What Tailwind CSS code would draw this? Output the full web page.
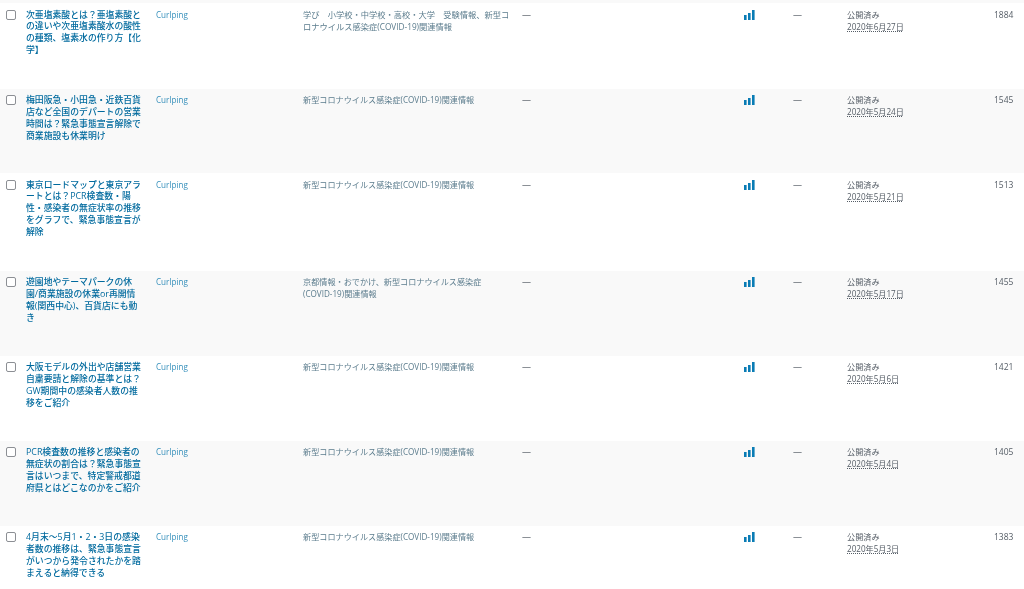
<!DOCTYPE html>
<html lang="ja"><head><meta charset="utf-8"><script src="https://cdn.jsdelivr.net/npm/@tailwindcss/browser@4"></script></head>
<body class="bg-white overflow-hidden font-['Open_Sans','Noto_Sans_CJK_JP',sans-serif] text-[8.15px] leading-[11.67px] text-[#555d66]">
<div class="h-[589px] overflow-hidden blur-[0.3px]">
<div class="h-[3px] bg-[#f9f9f9]"></div>

<div class="grid grid-cols-[26px_130px_147px_219px_221px_50px_54px_147px_30px] h-[86px] pt-[6px] bg-white">
<div class="pl-[6px] pt-[1px]"><div class="size-[10px] rounded-[2px] border border-[#8c8f94] bg-white"></div></div>
<a class="pt-[0.5px] text-[8.85px] leading-[11.9px] font-medium text-[#006a9e] whitespace-nowrap">次亜塩素酸とは？亜塩素酸と<br>の違いや次亜塩素酸水の酸性<br>の種類、塩素水の作り方【化<br>学】</a>
<a class="text-[#0073aa]/80">Curlping</a>
<a class="text-[8.25px] text-[#5b7c8d] whitespace-nowrap">学び　小学校・中学校・高校・大学　受験情報、新型コ<br>ロナウイルス感染症(COVID-19)関連情報</a>
<div class="text-[9px]">—</div>
<div><svg width="12" height="11" viewBox="0 0 12 11" class="fill-[#0a7cb5] block"><rect x="1" y="6" width="2.6" height="5"/><rect x="5" y="4" width="2.6" height="7"/><rect x="9" y="1" width="2.6" height="10"/></svg></div>
<div class="text-[9px]">—</div>
<div>公開済み<br><span class="underline decoration-dotted">2020年6月27日</span></div>
<div class="text-[8.5px]">1884</div>
</div>

<div class="grid grid-cols-[26px_130px_147px_219px_221px_50px_54px_147px_30px] h-[84px] pt-[5px] bg-[#f9f9f9]">
<div class="pl-[6px] pt-[1px]"><div class="size-[10px] rounded-[2px] border border-[#8c8f94] bg-white"></div></div>
<a class="pt-[1px] text-[8.85px] leading-[11.9px] font-medium text-[#006a9e] whitespace-nowrap">梅田阪急・小田急・近鉄百貨<br>店など全国のデパートの営業<br>時間は？緊急事態宣言解除で<br>商業施設も休業明け</a>
<a class="text-[#0073aa]/80">Curlping</a>
<a class="text-[#5b7c8d] whitespace-nowrap">新型コロナウイルス感染症(COVID-19)関連情報</a>
<div class="text-[9px]">—</div>
<div><svg width="12" height="11" viewBox="0 0 12 11" class="fill-[#0a7cb5] block"><rect x="1" y="6" width="2.6" height="5"/><rect x="5" y="4" width="2.6" height="7"/><rect x="9" y="1" width="2.6" height="10"/></svg></div>
<div class="text-[9px]">—</div>
<div>公開済み<br><span class="underline decoration-dotted">2020年5月24日</span></div>
<div class="text-[8.5px]">1545</div>
</div>

<div class="grid grid-cols-[26px_130px_147px_219px_221px_50px_54px_147px_30px] h-[98px] pt-[6px] bg-white">
<div class="pl-[6px] pt-[1px]"><div class="size-[10px] rounded-[2px] border border-[#8c8f94] bg-white"></div></div>
<a class="pt-[0.5px] text-[8.85px] leading-[11.9px] font-medium text-[#006a9e] whitespace-nowrap">東京ロードマップと東京アラ<br>ートとは？PCR検査数・陽<br>性・感染者の無症状率の推移<br>をグラフで、緊急事態宣言が<br>解除</a>
<a class="text-[#0073aa]/80">Curlping</a>
<a class="text-[#5b7c8d] whitespace-nowrap">新型コロナウイルス感染症(COVID-19)関連情報</a>
<div class="text-[9px]">—</div>
<div><svg width="12" height="11" viewBox="0 0 12 11" class="fill-[#0a7cb5] block"><rect x="1" y="6" width="2.6" height="5"/><rect x="5" y="4" width="2.6" height="7"/><rect x="9" y="1" width="2.6" height="10"/></svg></div>
<div class="text-[9px]">—</div>
<div>公開済み<br><span class="underline decoration-dotted">2020年5月21日</span></div>
<div class="text-[8.5px]">1513</div>
</div>

<div class="grid grid-cols-[26px_130px_147px_219px_221px_50px_54px_147px_30px] h-[85px] pt-[5px] bg-[#f9f9f9]">
<div class="pl-[6px] pt-[1px]"><div class="size-[10px] rounded-[2px] border border-[#8c8f94] bg-white"></div></div>
<a class="pt-[1px] text-[8.85px] leading-[11.9px] font-medium text-[#006a9e] whitespace-nowrap">遊園地やテーマパークの休<br>園/商業施設の休業or再開情<br>報(関西中心)、百貨店にも動<br>き</a>
<a class="text-[#0073aa]/80">Curlping</a>
<a class="text-[#5b7c8d] whitespace-nowrap">京都情報・おでかけ、新型コロナウイルス感染症<br>(COVID-19)関連情報</a>
<div class="text-[9px]">—</div>
<div><svg width="12" height="11" viewBox="0 0 12 11" class="fill-[#0a7cb5] block"><rect x="1" y="6" width="2.6" height="5"/><rect x="5" y="4" width="2.6" height="7"/><rect x="9" y="1" width="2.6" height="10"/></svg></div>
<div class="text-[9px]">—</div>
<div>公開済み<br><span class="underline decoration-dotted">2020年5月17日</span></div>
<div class="text-[8.5px]">1455</div>
</div>

<div class="grid grid-cols-[26px_130px_147px_219px_221px_50px_54px_147px_30px] h-[85px] pt-[5px] bg-white">
<div class="pl-[6px] pt-[1px]"><div class="size-[10px] rounded-[2px] border border-[#8c8f94] bg-white"></div></div>
<a class="pt-[1px] text-[8.85px] leading-[11.9px] font-medium text-[#006a9e] whitespace-nowrap">大阪モデルの外出や店舗営業<br>自粛要請と解除の基準とは？<br>GW期間中の感染者人数の推<br>移をご紹介</a>
<a class="text-[#0073aa]/80">Curlping</a>
<a class="text-[#5b7c8d] whitespace-nowrap">新型コロナウイルス感染症(COVID-19)関連情報</a>
<div class="text-[9px]">—</div>
<div><svg width="12" height="11" viewBox="0 0 12 11" class="fill-[#0a7cb5] block"><rect x="1" y="6" width="2.6" height="5"/><rect x="5" y="4" width="2.6" height="7"/><rect x="9" y="1" width="2.6" height="10"/></svg></div>
<div class="text-[9px]">—</div>
<div>公開済み<br><span class="underline decoration-dotted">2020年5月6日</span></div>
<div class="text-[8.5px]">1421</div>
</div>

<div class="grid grid-cols-[26px_130px_147px_219px_221px_50px_54px_147px_30px] h-[85px] pt-[5px] bg-[#f9f9f9]">
<div class="pl-[6px] pt-[1px]"><div class="size-[10px] rounded-[2px] border border-[#8c8f94] bg-white"></div></div>
<a class="pt-[1px] text-[8.85px] leading-[11.9px] font-medium text-[#006a9e] whitespace-nowrap">PCR検査数の推移と感染者の<br>無症状の割合は？緊急事態宣<br>言はいつまで、特定警戒都道<br>府県とはどこなのかをご紹介</a>
<a class="text-[#0073aa]/80">Curlping</a>
<a class="text-[#5b7c8d] whitespace-nowrap">新型コロナウイルス感染症(COVID-19)関連情報</a>
<div class="text-[9px]">—</div>
<div><svg width="12" height="11" viewBox="0 0 12 11" class="fill-[#0a7cb5] block"><rect x="1" y="6" width="2.6" height="5"/><rect x="5" y="4" width="2.6" height="7"/><rect x="9" y="1" width="2.6" height="10"/></svg></div>
<div class="text-[9px]">—</div>
<div>公開済み<br><span class="underline decoration-dotted">2020年5月4日</span></div>
<div class="text-[8.5px]">1405</div>
</div>

<div class="grid grid-cols-[26px_130px_147px_219px_221px_50px_54px_147px_30px] h-[63px] pt-[5px] bg-white">
<div class="pl-[6px] pt-[1px]"><div class="size-[10px] rounded-[2px] border border-[#8c8f94] bg-white"></div></div>
<a class="pt-[1px] text-[8.85px] leading-[11.9px] font-medium text-[#006a9e] whitespace-nowrap">4月末～5月1・2・3日の感染<br>者数の推移は、緊急事態宣言<br>がいつから発令されたかを踏<br>まえると納得できる</a>
<a class="text-[#0073aa]/80">Curlping</a>
<a class="text-[#5b7c8d] whitespace-nowrap">新型コロナウイルス感染症(COVID-19)関連情報</a>
<div class="text-[9px]">—</div>
<div><svg width="12" height="11" viewBox="0 0 12 11" class="fill-[#0a7cb5] block"><rect x="1" y="6" width="2.6" height="5"/><rect x="5" y="4" width="2.6" height="7"/><rect x="9" y="1" width="2.6" height="10"/></svg></div>
<div class="text-[9px]">—</div>
<div>公開済み<br><span class="underline decoration-dotted">2020年5月3日</span></div>
<div class="text-[8.5px]">1383</div>
</div>
</div>
</body></html>
